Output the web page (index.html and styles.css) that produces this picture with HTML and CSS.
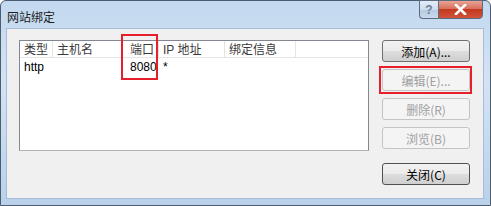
FILE: index.html
```html
<!DOCTYPE html>
<html lang="zh-CN">
<head>
  <meta charset="UTF-8" />
  <title>网站绑定</title>
  <link rel="stylesheet" href="styles.css">
</head>
<body>
  <div class="window">
    <div class="titlebar">
      <span class="title">网站绑定</span>
      <div class="caption-buttons">
        <span class="cap-btn help">?</span>
        <span class="cap-btn close">
          <svg width="13" height="11" viewBox="0 0 13 11">
            <path d="M2 1 L11 10 M11 1 L2 10" stroke="#fff" stroke-width="2.6" stroke-linecap="square"/>
            <path d="M2 1 L11 10 M11 1 L2 10" stroke="#fff" stroke-width="1.6"/>
          </svg>
        </span>
      </div>
    </div>

    <div class="content">
      <div class="listview">
        <div class="lv-row lv-header">
          <span class="c1">类型</span>
          <span class="c2">主机名</span>
          <span class="c3">端口</span>
          <span class="c4">IP 地址</span>
          <span class="c5">绑定信息</span>
          <span class="c6"></span>
        </div>
        <div class="lv-row">
          <span class="c1">http</span>
          <span class="c2"></span>
          <span class="c3">8080</span>
          <span class="c4">*</span>
          <span class="c5"></span>
        </div>
      </div>

      <div class="buttons">
        <button class="btn">添加(A)...</button>
        <button class="btn" disabled>编辑(E)...</button>
        <button class="btn" disabled>删除(R)</button>
        <button class="btn" disabled>浏览(B)</button>
        <button class="btn close-btn">关闭(C)</button>
      </div>
    </div>
  </div>

  <!-- annotation marks -->
  <div class="mark mark-port"></div>
  <div class="mark mark-edit"></div>
</body>
</html>
```

FILE: styles.css
```css
body {
  margin: 0;
  width: 491px;
  height: 206px;
  position: relative;
  background: #fff;
  font-family: "Liberation Sans", "Noto Sans CJK SC", sans-serif;
  font-size: 12px;
  color: #000;
  overflow: hidden;
}

.window {
  box-sizing: border-box;
  width: 491px;
  height: 206px;
  border: 1px solid #4d5d70;
  border-radius: 6px 6px 0 0;
  background: linear-gradient(180deg, #c3d9ef 0%, #d3e3f4 40%, #b9d1ea 100%);
  display: flex;
  flex-direction: column;
}

.titlebar {
  height: 27px;
  display: flex;
  justify-content: space-between;
  align-items: flex-start;
}

.title {
  padding: 7px 0 0 6px;
  font-family: "Noto Sans CJK SC", sans-serif;
  font-size: 12px;
  color: #1e1e1e;
}

.caption-buttons {
  display: flex;
  margin-right: 7px;
  margin-top: -1px;
}

.cap-btn {
  box-sizing: border-box;
  height: 19px;
  display: flex;
  align-items: center;
  justify-content: center;
  border: 1px solid #5b6b80;
}

.help {
  width: 19px;
  border-right: none;
  border-radius: 0 0 0 4px;
  background: linear-gradient(180deg, #e3edf7 0%, #cddcee 50%, #b4c9e0 51%, #c9daec 100%);
  color: #6d7e94;
  font-weight: bold;
  font-size: 12px;
}

.close {
  width: 45px;
  border-radius: 0 0 4px 0;
  background: linear-gradient(180deg, #e8a494 0%, #d8705c 45%, #c4391f 50%, #d0533a 100%);
}

.content {
  flex: 1;
  margin: 0 6px 6px 5px;
  border: 1px solid #a8bcd4;
  background: #f0f0f0;
  display: flex;
  padding: 11px 0 0 12px;
}

.listview {
  box-sizing: border-box;
  width: 350px;
  height: 111px;
  background: #fff;
  border: 1px solid #828790;
  border-bottom-color: #b5b5b5;
}

.lv-row {
  display: flex;
  height: 17px;
  line-height: 17px;
}

.lv-header {
  height: 16px;
  line-height: 16px;
  border-bottom: 1px solid #e5e5e5;
}

.lv-row span {
  box-sizing: border-box;
  padding-left: 4px;
  white-space: nowrap;
}

.lv-header span {
  border-right: 1px solid #e5e5e5;
  color: #3a3a3a;
  padding-top: 1px;
}

.lv-row:not(.lv-header) span {
  margin-top: 1px;
}

.c1 { width: 33px; }
.c2 { width: 70px; }
.c3 { width: 36px; padding-left: 7px !important; }
.c4 { width: 66px; }
.c5 { width: 71px; }
.c6 { width: 0; flex: 1; border-right: none !important; }

.buttons {
  display: flex;
  flex-direction: column;
  gap: 7px;
  margin-left: 13px;
}

.btn {
  box-sizing: border-box;
  width: 88px;
  height: 22px;
  padding: 0;
  border: 1px solid #707070;
  border-radius: 3px;
  background: linear-gradient(180deg, #f2f2f2 0%, #ebebeb 50%, #dddddd 51%, #cfcfcf 100%);
  font-family: "Noto Sans CJK SC", sans-serif;
  font-size: 12px;
  color: #000;
}

.btn:disabled {
  border-color: #c4c4c4;
  background: #f4f4f4;
  color: #a0a0a0;
}

.close-btn {
  margin-top: 7px;
  border-color: #505050;
}

.mark {
  position: absolute;
  border: 2px solid #e5202a;
}

.mark-port {
  left: 121px;
  top: 34px;
  width: 33px;
  height: 42px;
}

.mark-edit {
  left: 379px;
  top: 66px;
  width: 89px;
  height: 24px;
}
```
